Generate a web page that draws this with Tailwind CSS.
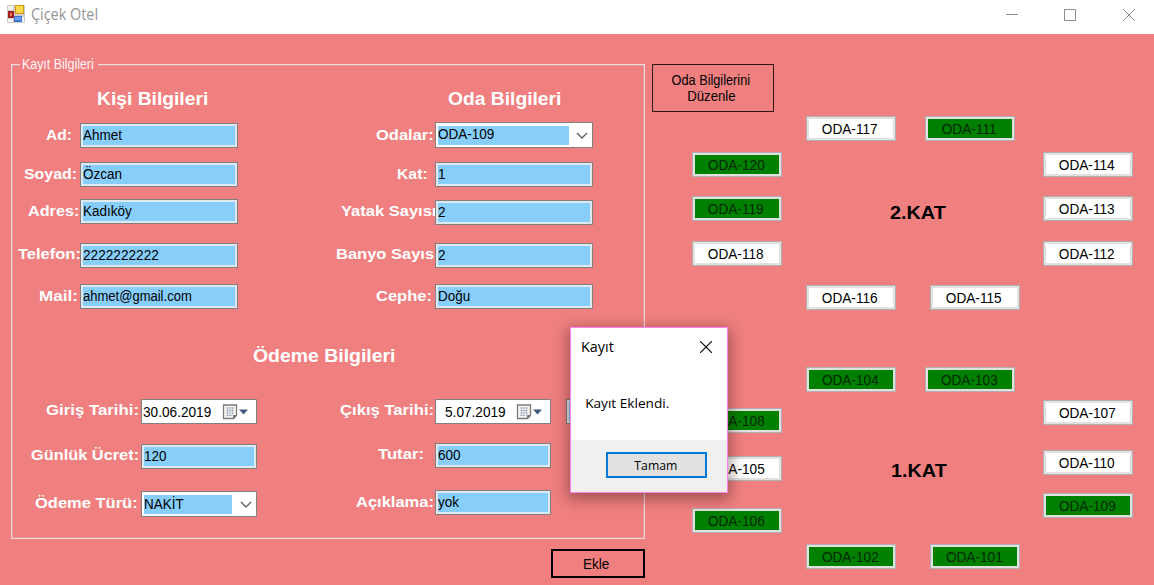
<!DOCTYPE html>
<html lang="tr">
<head>
<meta charset="utf-8">
<title>Çiçek Otel</title>
<script src="https://cdn.jsdelivr.net/npm/@tailwindcss/browser@4"></script>
</head>
<body class="relative flex h-[585px] w-[1154px] flex-col overflow-hidden bg-[#f08080] text-[15.5px] text-black font-['Liberation_Sans',sans-serif]">

<header class="flex h-[34px] shrink-0 items-center bg-white pl-[7px]">
  <svg class="mb-1.5 h-[18px] w-[18px]" viewBox="0 0 18 18">
    <rect width="18" height="18" rx="1" fill="#cfcdcb"/>
    <path d="M1 1h5v4H1zM1 17v-3h5v3zM15 12h2v5h-2z" fill="#f5f5f5"/>
    <rect x="8" y="0" width="9" height="9" fill="#d49a10"/><rect x="9" y="1" width="7" height="7" fill="#fbd84b"/>
    <rect x="1" y="6" width="6" height="7" fill="#a32020"/><rect x="3" y="8" width="2" height="3" fill="#ee7766"/>
    <rect x="7" y="11" width="8" height="6" fill="#3f75cf"/><rect x="8" y="12" width="6" height="3" fill="#6f9fec"/>
  </svg>
  <span class="mb-1.5 ml-[6px] w-[900px] origin-left scale-x-[0.9] text-[16px] whitespace-nowrap text-[#949494] font-['Open_Sans',sans-serif]">Çiçek Otel</span>
  <svg class="mb-1 ml-[75px] h-[14px] w-[130px] shrink-0" viewBox="0 0 130 14" fill="none" stroke="#8c8c8c">
    <path d="M0 6.5h12M58.500 1.500h11v11h-11zM117 1l12 12M129 1l-12 12"/>
  </svg>
</header>

<main class="flex h-[551px] shrink-0">
  <div class="w-[646px] shrink-0">
    <fieldset class="mt-[22px] ml-[11px] h-[483px] w-[634px] border border-[#ecdcdc] ring-1 ring-[#e8a4a4]/60 ring-inset">
      <legend class="ml-[8px] h-4 w-[78px] bg-[#f08080] pl-[2px] leading-4 text-[#fff4f4]"><span class="inline-block origin-left scale-x-[0.8] whitespace-nowrap">Kayıt Bilgileri</span></legend>

      <div class="flex pt-[17px] text-white">
        <section class="w-[318px] shrink-0 font-bold">
          <h2 class="ml-[85px] h-5 w-[101px] origin-left scale-x-[1.1] text-[17.5px] leading-5 whitespace-nowrap">Kişi Bilgileri</h2>
          <div class="mt-[14px] flex h-[25px] leading-[24px]"><div class="w-[68px] shrink-0 pl-[34px] text-[15px]"><span class="inline-block origin-left scale-x-[1.04]">Ad:</span></div><div class="relative w-[158px] border border-[#808080] bg-[#87cefa] pl-[2px] font-normal text-black inset-ring-2 inset-ring-[#dfe8ee] leading-[22px]"><span class="inline-block origin-left scale-x-[0.87]">Ahmet</span></div></div>
          <div class="mt-[14px] flex h-[25px] leading-[24px]"><div class="w-[68px] shrink-0 pl-[12px] text-[15px]"><span class="inline-block origin-left scale-x-[1.06]">Soyad:</span></div><div class="relative w-[158px] border border-[#808080] bg-[#87cefa] pl-[2px] font-normal text-black inset-ring-2 inset-ring-[#dfe8ee] leading-[22px]"><span class="inline-block origin-left scale-x-[0.87]">Özcan</span></div></div>
          <div class="mt-[12px] flex h-[25px] leading-[24px]"><div class="w-[68px] shrink-0 pl-[16px] text-[15px]"><span class="inline-block origin-left scale-x-[1.08]">Adres:</span></div><div class="relative w-[158px] border border-[#808080] bg-[#87cefa] pl-[2px] font-normal text-black inset-ring-2 inset-ring-[#dfe8ee] leading-[22px]"><span class="inline-block origin-left scale-x-[0.87]">Kadıköy</span></div></div>
          <div class="mt-[19px] flex h-[25px] leading-[22px]"><div class="w-[68px] shrink-0 pl-[6px] text-[15px]"><span class="inline-block origin-left scale-x-[1.1]">Telefon:</span></div><div class="relative w-[158px] border border-[#808080] bg-[#87cefa] pl-[2px] font-normal text-black inset-ring-2 inset-ring-[#dfe8ee] leading-[22px]"><span class="inline-block origin-left scale-x-[0.88]">2222222222</span></div></div>
          <div class="mt-[16px] flex h-[25px] leading-[24px]"><div class="w-[68px] shrink-0 pl-[27px] text-[15px]"><span class="inline-block origin-left scale-x-[1.14]">Mail:</span></div><div class="relative w-[158px] border border-[#808080] bg-[#87cefa] pl-[2px] font-normal text-black inset-ring-2 inset-ring-[#dfe8ee] leading-[22px]"><span class="inline-block origin-left scale-x-[0.84]">ahmet@gmail.com</span></div></div>
        </section>

        <section class="w-[314px] shrink-0 font-bold">
          <h2 class="ml-[118px] h-5 w-[104px] origin-left scale-x-[1.1] text-[17.5px] leading-5 whitespace-nowrap">Oda Bilgileri</h2>
          <div class="mt-[13px] flex h-[26px] leading-[25px]"><div class="w-[105px] shrink-0 pl-[46px] text-[15px]"><span class="inline-block origin-left scale-x-[1.1]">Odalar:</span></div><div class="relative flex w-[158px] items-center justify-between border border-[#808080] bg-white pl-[2px] font-normal text-black"><div class="h-[19px] w-[131px] bg-[#87cefa] leading-[15px]"><span class="inline-block origin-left scale-x-[0.87]">ODA-109</span></div><svg class="mr-[4px] h-3 w-3" viewBox="0 0 12 12" fill="none" stroke="#606060" stroke-width="1.4"><path d="M1 4l5 5 5-5"/></svg></div></div>
          <div class="mt-[14px] flex h-[25px] leading-[24px]"><div class="w-[105px] shrink-0 pl-[67px] text-[15px]"><span class="inline-block origin-left scale-x-[1.05]">Kat:</span></div><div class="relative w-[158px] border border-[#808080] bg-[#87cefa] pl-[2px] font-normal text-black inset-ring-2 inset-ring-[#dfe8ee] leading-[22px]"><span class="inline-block origin-left scale-x-[0.87]">1</span></div></div>
          <div class="mt-[13px] flex h-[25px] leading-[22px]"><div class="w-[105px] shrink-0 overflow-hidden pl-[11px] text-[15px] whitespace-nowrap"><span class="inline-block origin-left scale-x-[1.1]">Yatak Sayısı</span></div><div class="relative w-[158px] shrink-0 border border-[#808080] bg-[#87cefa] pl-[2px] font-normal text-black inset-ring-2 inset-ring-[#dfe8ee] leading-[22px]"><span class="inline-block origin-left scale-x-[0.87]">2</span></div></div>
          <div class="mt-[18px] flex h-[25px] leading-[22px]"><div class="w-[105px] shrink-0 overflow-hidden pl-[6px] text-[15px] whitespace-nowrap"><span class="inline-block origin-left scale-x-[1.1]">Banyo Sayısı</span></div><div class="relative w-[158px] shrink-0 border border-[#808080] bg-[#87cefa] pl-[2px] font-normal text-black inset-ring-2 inset-ring-[#dfe8ee] leading-[22px]"><span class="inline-block origin-left scale-x-[0.87]">2</span></div></div>
          <div class="mt-[16px] flex h-[25px] leading-[24px]"><div class="w-[105px] shrink-0 pl-[46px] text-[15px]"><span class="inline-block origin-left scale-x-[1.1]">Cephe:</span></div><div class="relative w-[158px] border border-[#808080] bg-[#87cefa] pl-[2px] font-normal text-black inset-ring-2 inset-ring-[#dfe8ee] leading-[22px]"><span class="inline-block origin-left scale-x-[0.87]">Doğu</span></div></div>
        </section>
      </div>

      <h2 class="mt-[37px] ml-[241px] h-5 w-[130px] origin-left scale-x-[1.11] text-[17.5px] leading-5 font-bold whitespace-nowrap text-white">Ödeme Bilgileri</h2>

      <div class="flex pt-[33px] text-white">
        <section class="w-[318px] shrink-0 font-bold whitespace-nowrap">
          <div class="flex h-[25px] leading-[22px]"><div class="w-[129px] shrink-0 pl-[34px] text-[15px]"><span class="inline-block origin-left scale-x-[1.12]">Giriş Tarihi:</span></div><div class="relative flex w-[116px] items-center border border-[#808080] bg-white pl-[1px] font-normal text-black"><span class="w-[79px] origin-left scale-x-[0.88]">30.06.2019</span><svg class="h-4 w-7" viewBox="0 0 28 16"><path d="M1.500 1h13v10.500l-3 3h-10z" fill="#f7f5f2" stroke="#7d7976" stroke-width="1.300"/><path d="M4 4h8M4 6.500h8M4 9h8M4 11.500h6M5.500 3v9M8 3v9M10.500 3v8" stroke="#a8b2c2" stroke-width=".8"/><path d="M11 15v-4h4z" fill="#777"/><path d="M17 5.500h9l-4.500 5z" fill="#42587f"/></svg></div></div>
          <div class="mt-[20px] flex h-[25px] leading-[22px]"><div class="w-[129px] shrink-0 pl-[19px] text-[15px]"><span class="inline-block origin-left scale-x-[1.09]">Günlük Ücret:</span></div><div class="relative w-[116px] border border-[#808080] bg-[#87cefa] pl-[2px] font-normal text-black inset-ring-2 inset-ring-[#dfe8ee]"><span class="inline-block origin-left scale-x-[0.87]">120</span></div></div>
          <div class="mt-[22px] flex h-[26px] leading-[24px]"><div class="w-[129px] shrink-0 pl-[23px] text-[15px]"><span class="inline-block origin-left scale-x-[1.1]">Ödeme Türü:</span></div><div class="relative flex w-[116px] items-center justify-between border border-[#808080] bg-white pl-[2px] font-normal text-black"><div class="h-[19px] w-[88px] bg-[#87cefa] leading-[17px]"><span class="inline-block origin-left scale-x-[0.87]">NAKİT</span></div><svg class="mr-[4px] h-3 w-3" viewBox="0 0 12 12" fill="none" stroke="#606060" stroke-width="1.4"><path d="M1 4l5 5 5-5"/></svg></div></div>
        </section>
        <section class="w-[221px] shrink-0 font-bold whitespace-nowrap">
          <div class="flex h-[25px] leading-[22px]"><div class="w-[105px] shrink-0 pl-[10px] text-[15px]"><span class="inline-block origin-left scale-x-[1.11]">Çıkış Tarihi:</span></div><div class="relative flex w-[116px] items-center border border-[#808080] bg-white pl-[9px] font-normal text-black"><span class="w-[71px] origin-left scale-x-[0.88]">5.07.2019</span><svg class="h-4 w-7" viewBox="0 0 28 16"><path d="M1.500 1h13v10.500l-3 3h-10z" fill="#f7f5f2" stroke="#7d7976" stroke-width="1.300"/><path d="M4 4h8M4 6.500h8M4 9h8M4 11.500h6M5.500 3v9M8 3v9M10.500 3v8" stroke="#a8b2c2" stroke-width=".8"/><path d="M11 15v-4h4z" fill="#777"/><path d="M17 5.500h9l-4.500 5z" fill="#42587f"/></svg></div></div>
          <div class="mt-[19px] flex h-[25px] leading-[22px]"><div class="w-[105px] shrink-0 pl-[48px] text-[15px]"><span class="inline-block origin-left scale-x-[1.11]">Tutar:</span></div><div class="relative w-[116px] border border-[#808080] bg-[#87cefa] pl-[2px] font-normal text-black inset-ring-2 inset-ring-[#dfe8ee]"><span class="inline-block origin-left scale-x-[0.87]">600</span></div></div>
          <div class="mt-[22px] flex h-[25px] leading-[24px]"><div class="w-[105px] shrink-0 pl-[26px] text-[15px]"><span class="inline-block origin-left scale-x-[1.1]">Açıklama:</span></div><div class="relative w-[116px] border border-[#808080] bg-[#87cefa] pl-[2px] leading-[22px] font-normal text-black inset-ring-2 inset-ring-[#dfe8ee]"><span class="inline-block origin-left scale-x-[0.87]">yok</span></div></div>
        </section>
        <div class="ml-[15px] h-[25px] w-[60px] border border-[#808080] bg-[#87cefa] inset-ring-2 inset-ring-[#dfe8ee]"></div>
      </div>
    </fieldset>
    <button class="mt-[10px] ml-[551px] flex h-[29px] w-[94px] items-center justify-center border-2 border-black pr-[3px]"><span class="scale-x-[0.87]">Ekle</span></button>
  </div>

  <!-- Room map: west, centre and east columns -->
  <section class="ml-[6px] flex whitespace-nowrap">
    <div class="flex w-[154px] flex-col pt-[30px]">
      <button class="flex h-[48px] w-[122px] flex-col items-center justify-center border border-[#301818] pr-[4px] leading-4"><span class="scale-x-[0.82]">Oda Bilgilerini</span><span class="scale-x-[0.85]">Düzenle</span></button>
      <div class="flex flex-col pl-[40px]">
        <button class="mt-[40px] h-[25px] w-[90px] border border-[#b0b0b0] bg-[#008000] pr-[2px] leading-[23px] text-[#042804] inset-ring-2 inset-ring-[#e1e1e1]"><span class="inline-block scale-x-[0.88]">ODA-120</span></button>
        <button class="mt-[19px] h-[25px] w-[90px] border border-[#b0b0b0] bg-[#008000] pr-[2px] leading-[23px] text-[#042804] inset-ring-2 inset-ring-[#e1e1e1]"><span class="inline-block scale-x-[0.88]">ODA-119</span></button>
        <button class="mt-[20px] h-[25px] w-[90px] border border-[#b0b0b0] bg-white pr-[2px] leading-[23px] inset-ring-2 inset-ring-[#e1e1e1]"><span class="inline-block scale-x-[0.88]">ODA-118</span></button>
        <button class="mt-[142px] h-[25px] w-[90px] border border-[#b0b0b0] bg-[#008000] pr-[2px] leading-[23px] text-[#042804] inset-ring-2 inset-ring-[#e1e1e1]"><span class="inline-block scale-x-[0.88]">ODA-108</span></button>
        <button class="mt-[23px] h-[25px] w-[90px] border border-[#b0b0b0] bg-white pr-[2px] leading-[23px] inset-ring-2 inset-ring-[#e1e1e1]"><span class="inline-block scale-x-[0.88]">ODA-105</span></button>
        <button class="mt-[27px] h-[25px] w-[90px] border border-[#b0b0b0] bg-[#008000] pr-[2px] leading-[23px] text-[#042804] inset-ring-2 inset-ring-[#e1e1e1]"><span class="inline-block scale-x-[0.88]">ODA-106</span></button>
      </div>
    </div>
    <div class="flex w-[237px] flex-col pt-[82px]">
      <div class="flex gap-[29px]">
        <button class="h-[25px] w-[90px] border border-[#b0b0b0] bg-white pr-[2px] leading-[22px] inset-ring-2 inset-ring-[#e1e1e1]"><span class="inline-block scale-x-[0.88]">ODA-117</span></button>
        <button class="h-[25px] w-[90px] border border-[#b0b0b0] bg-[#008000] pr-[2px] leading-[22px] text-[#042804] inset-ring-2 inset-ring-[#e1e1e1]"><span class="inline-block scale-x-[0.88]">ODA-111</span></button>
      </div>
      <h2 class="mt-[61px] ml-[84px] h-[22px] w-[60px] origin-left scale-x-[1.1] text-[18px] leading-[22px] font-bold">2.KAT</h2>
      <div class="mt-[61px] flex gap-[34px]">
        <button class="h-[25px] w-[90px] border border-[#b0b0b0] bg-white pr-[2px] leading-[22px] inset-ring-2 inset-ring-[#e1e1e1]"><span class="inline-block scale-x-[0.88]">ODA-116</span></button>
        <button class="h-[25px] w-[90px] border border-[#b0b0b0] bg-white pr-[2px] leading-[22px] inset-ring-2 inset-ring-[#e1e1e1]"><span class="inline-block scale-x-[0.88]">ODA-115</span></button>
      </div>
      <div class="mt-[57px] flex gap-[29px]">
        <button class="h-[25px] w-[90px] border border-[#b0b0b0] bg-[#008000] pr-[2px] leading-[22px] text-[#042804] inset-ring-2 inset-ring-[#e1e1e1]"><span class="inline-block scale-x-[0.88]">ODA-104</span></button>
        <button class="h-[25px] w-[90px] border border-[#b0b0b0] bg-[#008000] pr-[2px] leading-[22px] text-[#042804] inset-ring-2 inset-ring-[#e1e1e1]"><span class="inline-block scale-x-[0.88]">ODA-103</span></button>
      </div>
      <h2 class="mt-[68px] ml-[85px] h-[22px] w-[60px] origin-left scale-x-[1.1] text-[18px] leading-[22px] font-bold">1.KAT</h2>
      <div class="mt-[62px] flex gap-[34px]">
        <button class="h-[25px] w-[90px] border border-[#b0b0b0] bg-[#008000] pr-[2px] leading-[23px] text-[#042804] inset-ring-2 inset-ring-[#e1e1e1]"><span class="inline-block scale-x-[0.88]">ODA-102</span></button>
        <button class="h-[25px] w-[90px] border border-[#b0b0b0] bg-[#008000] pr-[2px] leading-[23px] text-[#042804] inset-ring-2 inset-ring-[#e1e1e1]"><span class="inline-block scale-x-[0.88]">ODA-101</span></button>
      </div>
    </div>
    <div class="flex flex-col pt-[118px]">
      <button class="h-[25px] w-[90px] border border-[#b0b0b0] bg-white pr-[2px] leading-[23px] inset-ring-2 inset-ring-[#e1e1e1]"><span class="inline-block scale-x-[0.88]">ODA-114</span></button>
      <button class="mt-[19px] h-[25px] w-[90px] border border-[#b0b0b0] bg-white pr-[2px] leading-[23px] inset-ring-2 inset-ring-[#e1e1e1]"><span class="inline-block scale-x-[0.88]">ODA-113</span></button>
      <button class="mt-[20px] h-[25px] w-[90px] border border-[#b0b0b0] bg-white pr-[2px] leading-[23px] inset-ring-2 inset-ring-[#e1e1e1]"><span class="inline-block scale-x-[0.88]">ODA-112</span></button>
      <button class="mt-[134px] h-[25px] w-[90px] border border-[#b0b0b0] bg-white pr-[2px] leading-[22px] inset-ring-2 inset-ring-[#e1e1e1]"><span class="inline-block scale-x-[0.88]">ODA-107</span></button>
      <button class="mt-[25px] h-[25px] w-[90px] border border-[#b0b0b0] bg-white pr-[2px] leading-[22px] inset-ring-2 inset-ring-[#e1e1e1]"><span class="inline-block scale-x-[0.88]">ODA-110</span></button>
      <button class="mt-[18px] h-[25px] w-[90px] border border-[#b0b0b0] bg-[#008000] pr-[2px] leading-[23px] text-[#042804] inset-ring-2 inset-ring-[#e1e1e1]"><span class="inline-block scale-x-[0.88]">ODA-109</span></button>
    </div>
  </section>
</main>

<!-- Confirmation message box -->
<div class="absolute top-[327px] left-[570px] flex h-[166px] w-[158px] flex-col border border-[#ff80f0] bg-white whitespace-nowrap shadow-[0_4px_14px_2px_rgba(60,20,20,0.45)] font-['Open_Sans',sans-serif]">
  <div class="flex h-[38px] items-center justify-between pr-[15px] pl-[10px]">
    <span class="mb-0.5 origin-left scale-x-[0.96] text-[15px]">Kayıt</span>
    <svg class="h-[12px] w-[12px]" viewBox="0 0 12 12" stroke="#000" stroke-width="1.1"><path d="M0 0l12 12M12 0L0 12"/></svg>
  </div>
  <p class="h-[74px] origin-left scale-x-[1.01] pt-[27px] pl-[14px] text-[13.5px] leading-5 font-medium">Kayıt Eklendi.</p>
  <div class="flex flex-1 justify-end bg-[#f0f0f0] pt-[12px] pr-[20px]">
    <button class="h-[26px] w-[101px] border-2 border-[#0078d7] bg-[#e1e1e1] pr-[2px] text-[13px] leading-[22px] font-medium"><span class="inline-block scale-x-[0.94]">Tamam</span></button>
  </div>
</div>
</body>
</html>
